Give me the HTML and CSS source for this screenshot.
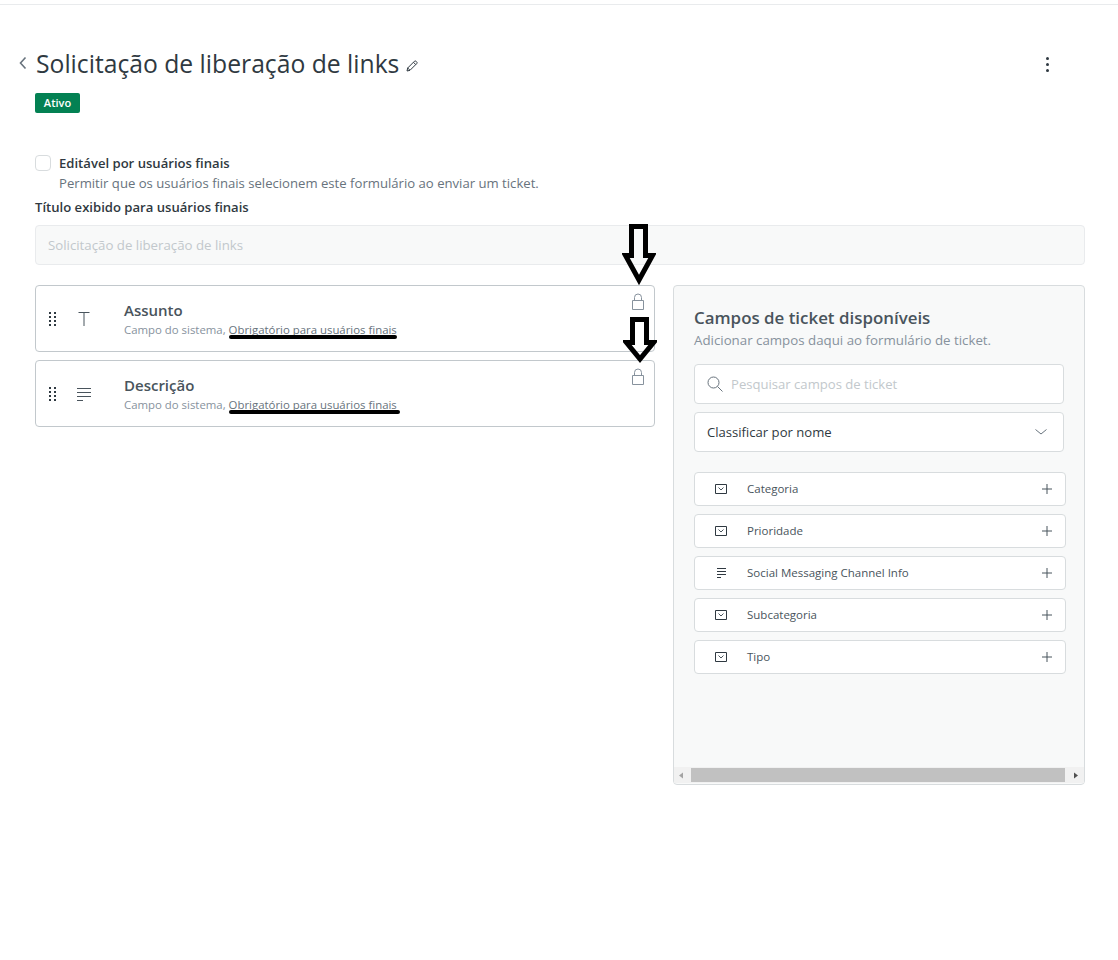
FILE: index.html
```html
<!DOCTYPE html>
<html lang="pt-BR">
<head>
<meta charset="utf-8">
<title>Solicitação de liberação de links</title>
<link rel="stylesheet" href="styles.css">
</head>
<body>
<div class="topline"></div>
<main class="page">
  <header class="head">
    <svg class="back" width="8" height="14" viewBox="0 0 8 14"><path d="M6.500 1.500 1.500 7l5 5.500" fill="none" stroke="#68737d" stroke-width="1.600"/></svg>
    <h1 class="title">Solicitação de liberação de links</h1>
    <svg class="pencil" width="12" height="12" viewBox="0 0 12 12"><path d="M1 11l.7-3L8.500 1.200a1 1 0 0 1 1.400 0l.9.9a1 1 0 0 1 0 1.400L4 10.300zM7.500 2.300l2.200 2.200M1.700 8 4 10.300" fill="none" stroke="#2f3941"/></svg>
    <span class="more"><i></i><i></i><i></i></span>
  </header>
  <span class="badge">Ativo</span>

  <div class="check">
    <span class="box"></span>
    <div>
      <div class="check-label">Editável por usuários finais</div>
      <div class="check-hint">Permitir que os usuários finais selecionem este formulário ao enviar um ticket.</div>
    </div>
  </div>
  <div class="field-label">Título exibido para usuários finais</div>
  <div class="title-input">Solicitação de liberação de links</div>

  <div class="columns">
    <section class="fields">
      <article class="field">
        <svg class="grip" width="8" height="14" viewBox="0 0 8 14" fill="#2f3941"><path d="M0 0h2v2H0zM5 0h2v2H5zM0 4h2v2H0zM5 4h2v2H5zM0 8h2v2H0zM5 8h2v2H5zM0 12h2v2H0zM5 12h2v2H5z"/></svg>
        <svg class="ftype" width="16" height="16" viewBox="0 0 16 16"><path d="M2.500 1.500h11M8 1.500V15" fill="none" stroke="#49545c"/></svg>
        <div>
          <h3 class="field-name">Assunto</h3>
          <p class="field-meta">Campo do sistema, <span class="req">Obrigatório para usuários finais<span class="mark m1"></span></span></p>
        </div>
        <svg class="lock" width="14" height="17" viewBox="0 0 14 17"><path d="M1.500 7.500h11v9h-11zM3.500 7.500V4.500a3.500 3.500 0 0 1 7 0v3" fill="none" stroke="#87929d"/></svg>
      </article>
      <article class="field">
        <svg class="grip" width="8" height="14" viewBox="0 0 8 14" fill="#2f3941"><path d="M0 0h2v2H0zM5 0h2v2H5zM0 4h2v2H0zM5 4h2v2H5zM0 8h2v2H0zM5 8h2v2H5zM0 12h2v2H0zM5 12h2v2H5z"/></svg>
        <svg class="ftype" width="16" height="16" viewBox="0 0 16 16"><path d="M1 2.500h14M1 6.500h14M1 10.500h14M1 14.500h6" fill="none" stroke="#49545c"/></svg>
        <div>
          <h3 class="field-name">Descrição</h3>
          <p class="field-meta">Campo do sistema, <span class="req">Obrigatório para usuários finais<span class="mark m2"></span></span></p>
        </div>
        <svg class="lock" width="14" height="17" viewBox="0 0 14 17"><path d="M1.500 7.500h11v9h-11zM3.500 7.500V4.500a3.500 3.500 0 0 1 7 0v3" fill="none" stroke="#87929d"/></svg>
      </article>
    </section>

    <aside class="panel">
      <div class="panel-body">
        <h2 class="panel-title">Campos de ticket disponíveis</h2>
        <p class="panel-sub">Adicionar campos daqui ao formulário de ticket.</p>
        <div class="control search">
          <svg width="16" height="16" viewBox="0 0 16 16"><circle cx="6.500" cy="6.500" r="5.500" fill="none" stroke="#68737d"/><path d="m10.500 10.500 5 5" stroke="#68737d"/></svg>
          <span>Pesquisar campos de ticket</span>
        </div>
        <div class="control select">
          <span>Classificar por nome</span>
          <svg width="12" height="6" viewBox="0 0 12 6"><path d="M.5.500 6 5 11.500.500" fill="none" stroke="#68737d"/></svg>
        </div>
        <ul class="avail">
          <li><svg class="ico" width="12" height="10" viewBox="0 0 12 10"><path d="M.5.500h11v9H.5z" fill="none" stroke="#2f3941"/><path d="M3.500 3.500 6 6l2.500-2.500" fill="none" stroke="#49545c"/></svg><span class="name">Categoria</span><svg class="plus" width="10" height="10" viewBox="0 0 10 10"><path d="M5 0v10M0 5h10" stroke="#49545c"/></svg></li>
          <li><svg class="ico" width="12" height="10" viewBox="0 0 12 10"><path d="M.5.500h11v9H.5z" fill="none" stroke="#2f3941"/><path d="M3.500 3.500 6 6l2.500-2.500" fill="none" stroke="#49545c"/></svg><span class="name">Prioridade</span><svg class="plus" width="10" height="10" viewBox="0 0 10 10"><path d="M5 0v10M0 5h10" stroke="#49545c"/></svg></li>
          <li><svg class="ico" width="12" height="10" viewBox="0 0 12 10"><path d="M2 .500h9M2 3.500h9M2 6.500h9M2 9.500h4" fill="none" stroke="#2f3941"/></svg><span class="name">Social Messaging Channel Info</span><svg class="plus" width="10" height="10" viewBox="0 0 10 10"><path d="M5 0v10M0 5h10" stroke="#49545c"/></svg></li>
          <li><svg class="ico" width="12" height="10" viewBox="0 0 12 10"><path d="M.5.500h11v9H.5z" fill="none" stroke="#2f3941"/><path d="M3.500 3.500 6 6l2.500-2.500" fill="none" stroke="#49545c"/></svg><span class="name">Subcategoria</span><svg class="plus" width="10" height="10" viewBox="0 0 10 10"><path d="M5 0v10M0 5h10" stroke="#49545c"/></svg></li>
          <li><svg class="ico" width="12" height="10" viewBox="0 0 12 10"><path d="M.5.500h11v9H.5z" fill="none" stroke="#2f3941"/><path d="M3.500 3.500 6 6l2.500-2.500" fill="none" stroke="#49545c"/></svg><span class="name">Tipo</span><svg class="plus" width="10" height="10" viewBox="0 0 10 10"><path d="M5 0v10M0 5h10" stroke="#49545c"/></svg></li>
        </ul>
      </div>
      <div class="hscroll">
        <svg width="17" height="15" viewBox="0 0 17 15"><path d="M9 4.500v6l-4-3z" fill="#a3a3a3"/></svg>
        <span class="thumb"></span>
        <svg width="19" height="15" viewBox="0 0 19 15"><path d="M9 4.500v6l4-3z" fill="#505050"/></svg>
      </div>
    </aside>
  </div>

  <svg class="arrow a1" width="34" height="64" viewBox="0 0 34 64"><path d="M9.500 3.500h14v29h7L17 57 3.500 32.500h6z" fill="none" stroke="#000" stroke-width="5"/></svg>
  <svg class="arrow a2" width="34" height="50" viewBox="0 0 34 50"><path d="M9.500 3.500h14v23h7L17 43 3.500 26.500h6z" fill="none" stroke="#000" stroke-width="5"/></svg>
</main>
</body>
</html>
```

FILE: styles.css
```css
* { box-sizing: border-box; }
html, body { margin: 0; padding: 0; }
body { background: #fff; font-family: "Open Sans", "Noto Sans", "Liberation Sans", sans-serif; color: #2f3941; }
.topline { height: 5px; border-bottom: 1px solid #e9ebed; }
.page { position: relative; padding: 39px 33px 0 35px; }

.head { display: flex; align-items: center; height: 40px; margin-left: -16px; }
.back { margin-right: 10px; margin-top: -3px; flex: none; }
.title { margin: 0 0 0 -1px; font-size: 24.7px; font-weight: 400; line-height: 40px; color: #2f3941; white-space: nowrap; }
.pencil { margin: 4px 0 0 7px; flex: none; }
.more { margin-left: auto; margin-right: 36px; display: flex; flex-direction: column; gap: 3px; }
.more i { display: block; width: 3px; height: 3px; border-radius: 50%; background: #2f3941; }

.badge { display: block; width: 45px; height: 20px; margin-top: 9px; background: #038153; border-radius: 2px; color: #fff; font-size: 11px; font-weight: 600; line-height: 20px; text-align: center; }

.check { display: flex; gap: 8px; margin-top: 40px; }
.box { width: 16px; height: 16px; margin-top: 2px; border: 1px solid #d8dcde; border-radius: 4px; flex: none; }
.check-label { font-size: 13.1px; font-weight: 600; line-height: 20px; color: #2f3941; }
.check-hint { font-size: 13.14px; line-height: 20px; color: #68737d; }
.field-label { margin-top: 4px; font-size: 13.1px; font-weight: 600; line-height: 20px; }
.title-input { height: 40px; margin-top: 8px; padding: 0 12px; background: #f8f9f9; border: 1px solid #e9ebed; border-radius: 4px; font-size: 13.25px; line-height: 38px; color: #c2c8cc; }

.columns { display: flex; gap: 18px; margin-top: 20px; align-items: flex-start; }
.fields { width: 620px; display: flex; flex-direction: column; gap: 8px; flex: none; }
.field { position: relative; display: flex; align-items: center; height: 67px; border: 1px solid #c2c8cc; border-radius: 4px; padding-left: 13px; }
.grip { flex: none; margin-right: 19px; }
.ftype { flex: none; margin-right: 32px; }
.field-name { margin: 0; font-size: 15px; font-weight: 600; line-height: 20px; color: #49545c; }
.field-meta { margin: 2px 0 -1px; font-size: 11.4px; line-height: 16px; color: #87929d; }
.req { position: relative; color: #68737d; }
.mark { position: absolute; left: 0; height: 4px; top: 13px; background: #000; border-radius: 2px; }
.m1 { width: 168px; }
.m2 { width: 171px; }
.lock { position: absolute; top: 7px; right: 9px; }

.panel { width: 412px; height: 500px; flex: none; display: flex; flex-direction: column; justify-content: space-between; background: #f8f9f9; border: 1px solid #d8dcde; border-radius: 4px; }
.panel-body { padding: 20px 18px 0 20px; }
.panel-title { margin: 0; font-size: 16.9px; font-weight: 600; line-height: 24px; color: #49545c; }
.panel-sub { margin: 0; font-size: 13.3px; line-height: 20px; color: #87929d; }
.control { display: flex; align-items: center; width: 370px; height: 40px; background: #fff; border: 1px solid #d8dcde; border-radius: 4px; padding: 0 12px; font-size: 13.1px; }
.search { margin-top: 14px; gap: 8px; color: #c2c8cc; }
.select { margin-top: 8px; justify-content: space-between; color: #2f3941; padding-right: 16px; }

.avail { list-style: none; margin: 20px 0 0; padding: 0; display: flex; flex-direction: column; gap: 8px; }
.avail li { display: flex; align-items: center; height: 34px; background: #fff; border: 1px solid #d8dcde; border-radius: 4px; padding: 0 13px 0 20px; }
.ico { flex: none; margin-right: 20px; }
.name { font-size: 11.5px; line-height: 14px; color: #49545c; }
.plus { margin-left: auto; flex: none; }

.hscroll { display: flex; align-items: center; height: 16px; margin-bottom: 1px; background: #f1f1f1; }
.thumb { flex: 1; height: 14px; background: #c1c1c1; }

.arrow { position: absolute; }
.a1 { left: 622px; top: 218px; }
.a2 { left: 623px; top: 311px; }
```
